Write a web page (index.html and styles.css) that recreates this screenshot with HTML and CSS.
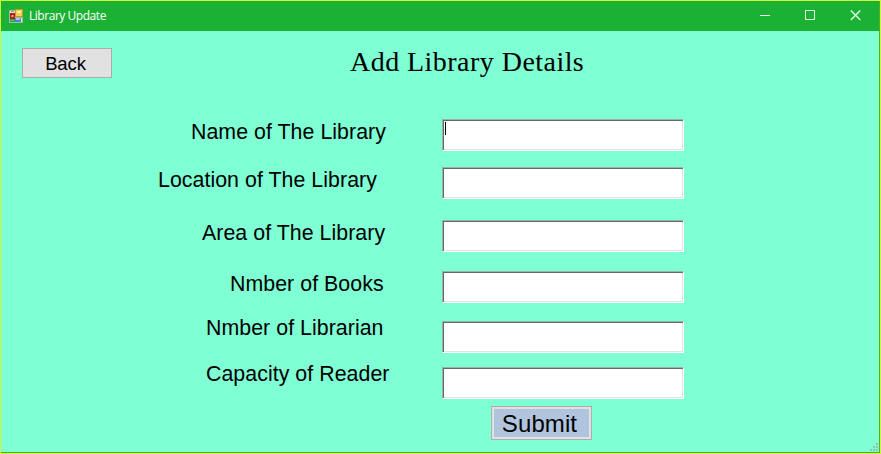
FILE: index.html
```html
<!DOCTYPE html>
<html lang="en">
<head>
<meta charset="utf-8">
<title>Library Update</title>
<link rel="stylesheet" href="styles.css">
</head>
<body>
<div class="window">
  <header class="titlebar">
    <svg class="app-icon" width="15" height="15" viewBox="0 0 15 15">
      <path d="M.5 1.500h6v12h-6zM.5 13.500h13v-5h-13z" fill="#dfe6d8" stroke="#a3bd9b"/>
      <rect x="1" y="4" width="5" height="6" fill="#b51f24"/>
      <rect x="2.500" y="6" width="2" height="2" fill="#f0a592"/>
      <rect x="6.5" y="0.5" width="7" height="7" fill="#f7cf54" stroke="#c9961f"/>
      <rect x="8" y="2" width="4" height="2" fill="#fff0a8"/>
      <rect x="6" y="9" width="6" height="4" fill="#4a86d8"/>
      <rect x="7" y="9" width="4" height="2" fill="#9cc8f5"/>
      <path d="M2 11.5h3M2 2.5h3" stroke="#8e9a91"/>
    </svg>
    <span class="caption">Library Update</span>
    <div class="controls">
      <svg width="11" height="11" viewBox="0 0 11 11"><path d="M0 5.5h10"/></svg>
      <svg width="11" height="11" viewBox="0 0 11 11"><path d="M.5 .5h9v9h-9z"/></svg>
      <svg class="close" width="11" height="11" viewBox="0 0 11 11"><path d="M.8 .5l9.500 9.500M10.300 .5L.8 10"/></svg>
    </div>
  </header>
  <main class="form">
    <div class="top">
      <button class="back">Back</button>
      <h1 class="heading">Add Library Details</h1>
    </div>
    <div class="row"><label class="name">Name of The Library</label><div class="field"><span class="caret"></span></div></div>
    <div class="row location-row"><label class="location">Location of The Library</label><div class="field"></div></div>
    <div class="row area-row"><label class="area">Area of The Library</label><div class="field"></div></div>
    <div class="row books-row"><label class="books">Nmber of Books</label><div class="field"></div></div>
    <div class="row librarian-row"><label class="librarian">Nmber of Librarian</label><div class="field"></div></div>
    <div class="row capacity-row"><label class="capacity">Capacity of Reader</label><div class="field"></div></div>
    <button class="submit">Submit</button>
  </main>
  <svg class="grip" width="8" height="8" viewBox="0 0 8 8"><path d="M6 0h2v2H6zM3 3h2v2H3zM6 3h2v2H6zM0 6h2v2H0zM3 6h2v2H3zM6 6h2v2H6z"/></svg>
</div>
</body>
</html>
```
FILE: styles.css
```css
* { box-sizing: border-box; }
body { margin: 0; font-family: "Liberation Sans", Arial, sans-serif; color: #000; }
.window {
  position: relative;
  width: 881px;
  height: 454px;
  border: 1px solid #cdfb35;
  background: #7fffd4;
  box-shadow: inset -1px -1px #4fae22;
  overflow: hidden;
}
.titlebar {
  display: flex;
  align-items: center;
  height: 30px;
  margin-right: 1px;
  padding: 0 18px 0 8px;
  background: #1ab135;
}
.app-icon { display: block; }
.caption {
  margin-left: 5px;
  font: 12px/16px "Open Sans", "Noto Sans", sans-serif;
  letter-spacing: -0.46px;
  color: #fff;
}
.controls { display: flex; gap: 34px; margin: -1px 0 0 auto; }
.controls svg { display: block; fill: none; stroke: #e9ffe9; }
.controls .close { stroke-width: 1.3; }
.form { padding-top: 17px; }
.top { display: flex; height: 71px; }
.back {
  width: 90px;
  height: 30px;
  margin-left: 21px;
  padding: 1px 3px 0 0;
  border: 1px solid #adadad;
  background: #e1e1e1;
  font: 18.5px/27px "Liberation Sans", sans-serif;
  letter-spacing: -0.1px;
  color: #000;
}
.heading {
  margin: -3px 0 0 238px;
  font: 28px/34px "Palatino Linotype", Palatino, "Liberation Serif", serif;
  letter-spacing: 0.46px;
  white-space: nowrap;
}
.row { display: grid; grid-template-columns: 441px 242px; height: 32px; }
.row label { padding-top: 1px; font-size: 21.33px; line-height: 24px; letter-spacing: 0.05px; white-space: nowrap; }
.location-row { margin-top: 16px; }
.area-row { margin-top: 21px; }
.books-row { margin-top: 19px; }
.librarian-row { margin-top: 18px; }
.capacity-row { margin-top: 14px; }
.name { margin-left: 190px; }
.location { margin-left: 157px; }
.area { margin-left: 201px; }
.books { margin-left: 229px; }
.librarian, .capacity { margin-left: 205px; }
.row .librarian, .row .capacity { margin-top: -6px; }
.field {
  padding: 1px;
  border: 1px solid;
  border-color: #8fb5a6 #fff #fff #8fb5a6;
  background: #fff;
  box-shadow: inset 1px 1px #696969, inset -1px -1px #e3e3e3;
}
.caret { display: block; width: 1px; height: 13px; margin: 1px; background: #000; }
.submit {
  display: block;
  width: 101px;
  height: 34px;
  margin: 7px 0 0 490px;
  padding: 2px 4px 0 0;
  border: 1px solid #adadad;
  background: #b0c4de;
  box-shadow: inset 0 0 0 2px #e1e1e1;
  font: 24px/30px "Liberation Sans", sans-serif;
  letter-spacing: 0.1px;
  color: #000;
}
.grip { position: absolute; right: 2px; bottom: 2px; fill: #8fc4b4; }
```
